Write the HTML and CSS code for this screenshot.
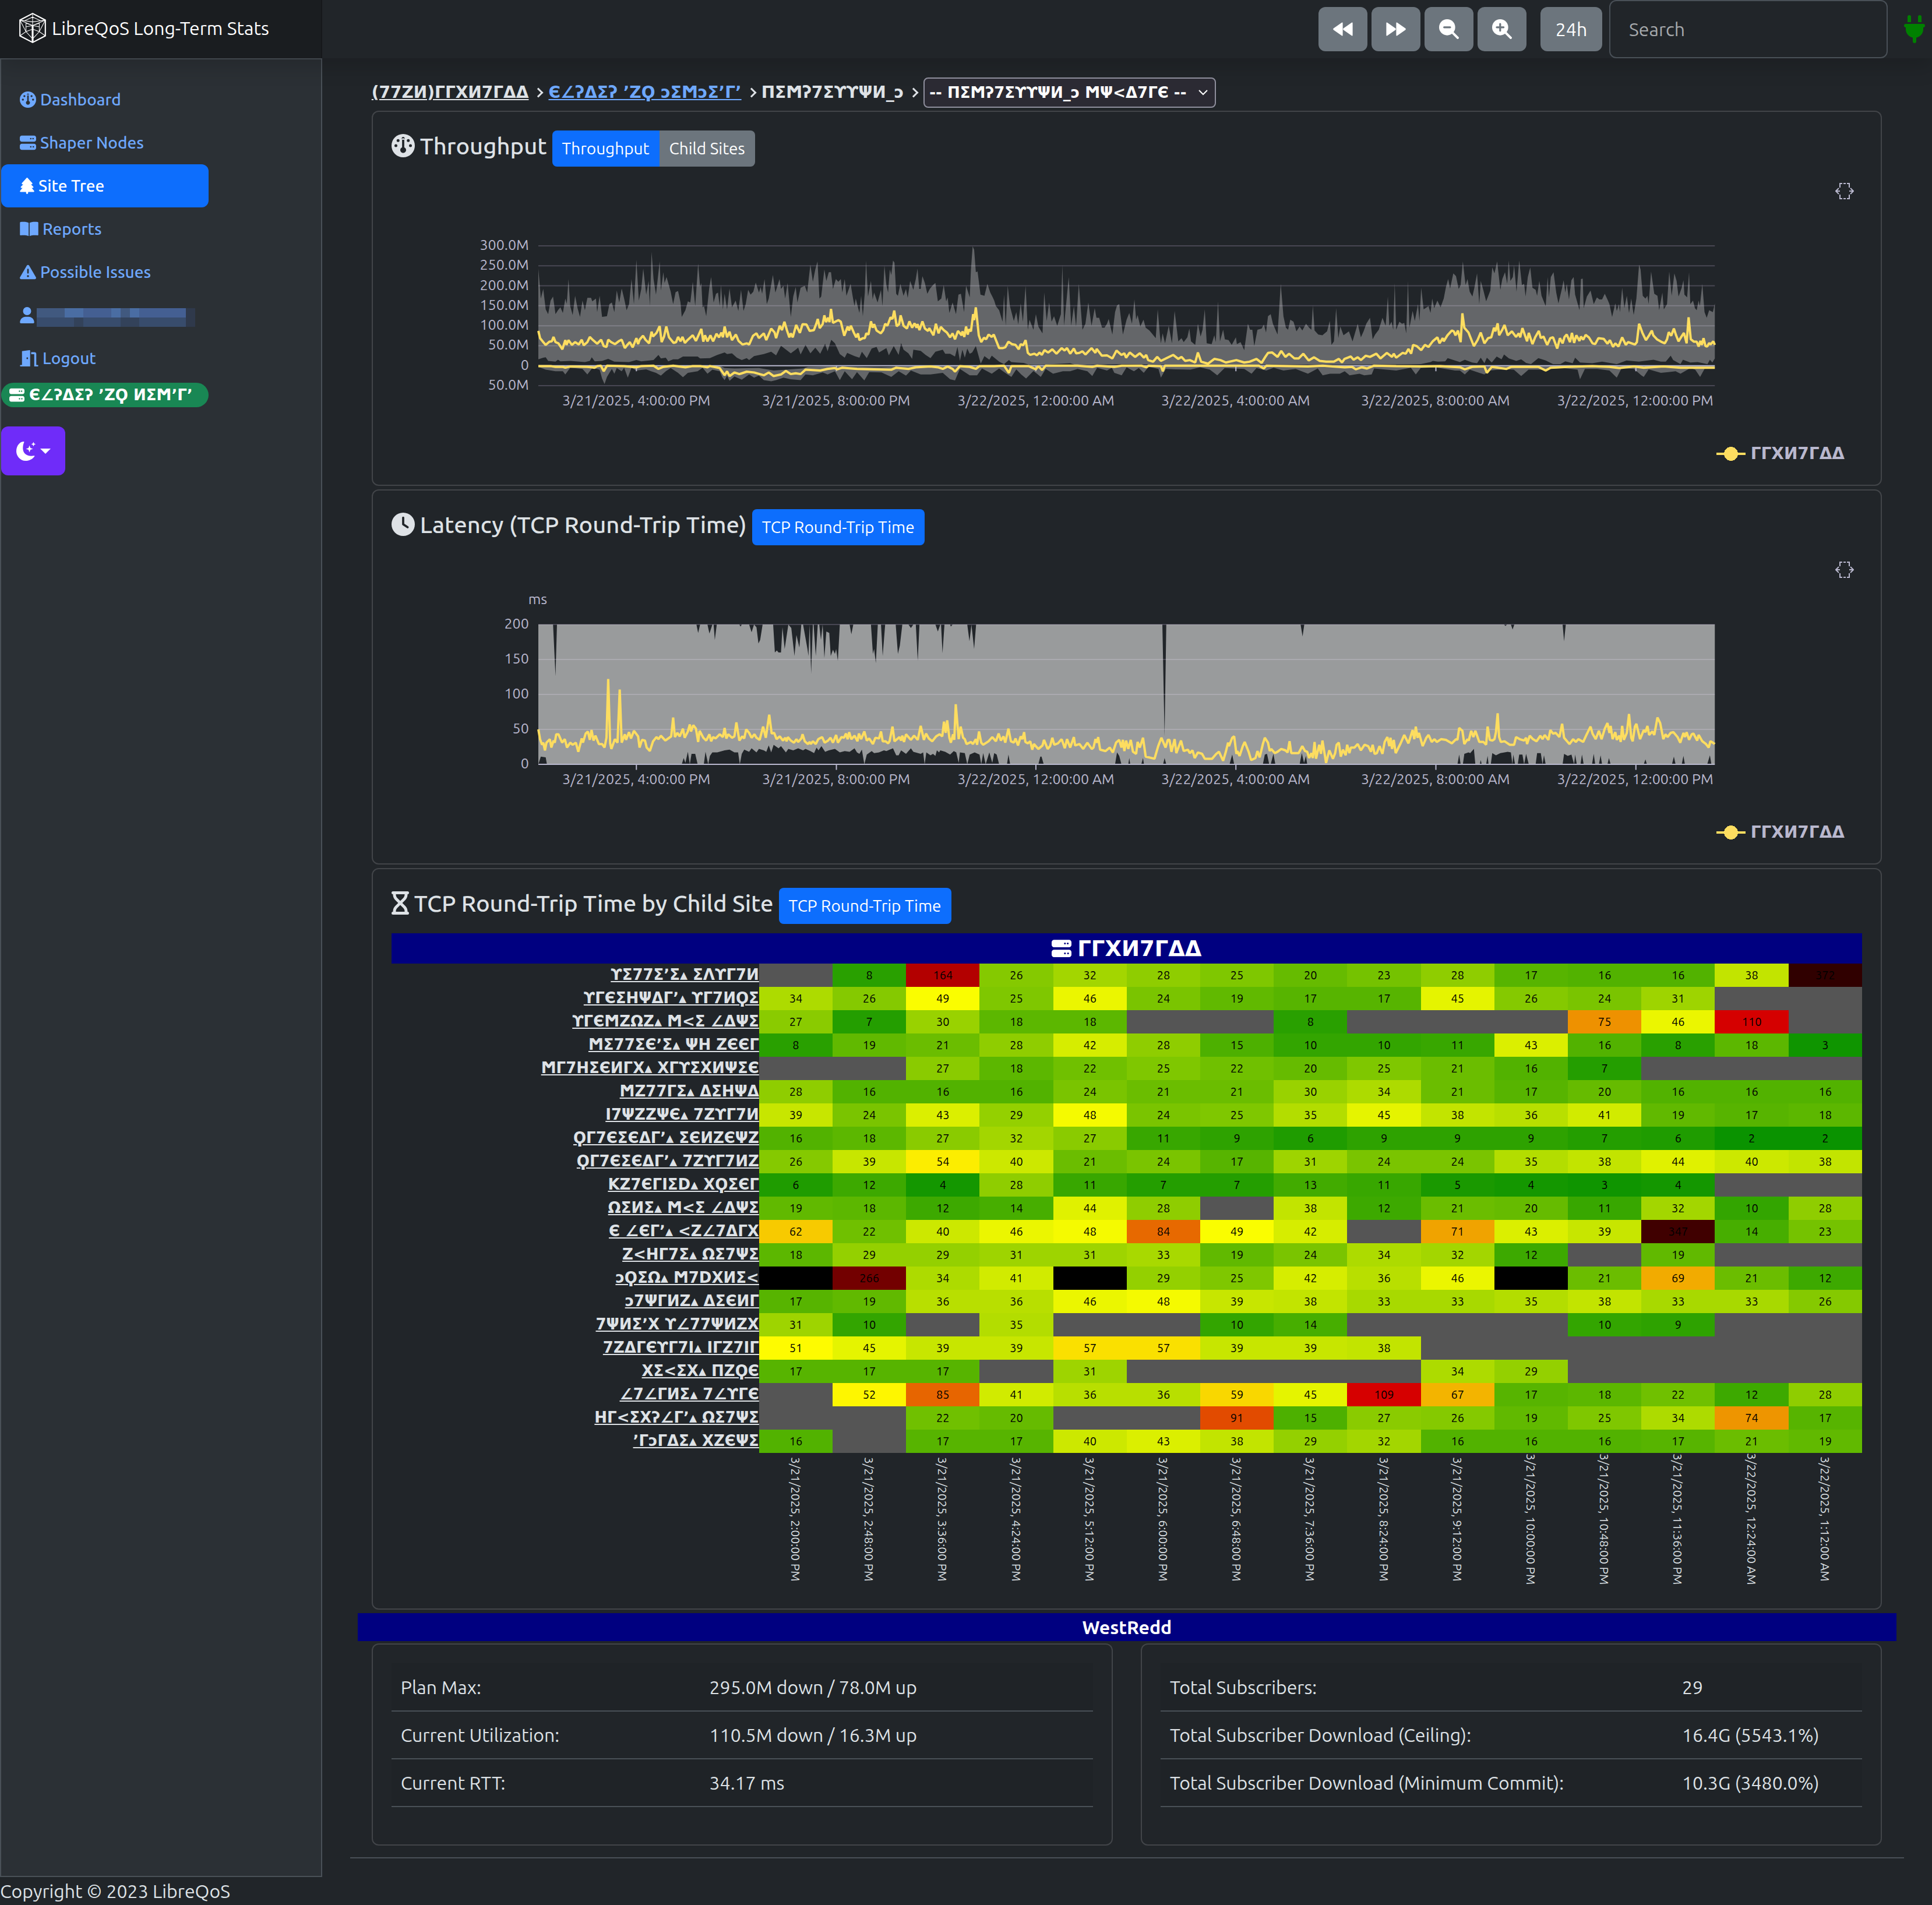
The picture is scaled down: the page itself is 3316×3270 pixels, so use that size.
FILE: index.html
```html
<!DOCTYPE html>
<html lang="en">
<head>
<meta charset="utf-8">
<title>LibreQoS Long-Term Stats</title>
<link rel="stylesheet" href="styles.css">
</head>
<body>

<svg class="sprite" aria-hidden="true">
  <symbol id="i-gauge" viewBox="0 0 512 512"><path fill-rule="evenodd" d="M256 0a256 256 0 1 1 0 512a256 256 0 1 1 0-512zM288 96a32 32 0 1 0-64 0a32 32 0 1 0 64 0zM256 416c35 0 64-29 64-64c0-24-14-46-40-57V96h-48v199c-26 11-40 33-40 57c0 35 29 64 64 64zM176 144a32 32 0 1 0-64 0a32 32 0 1 0 64 0zM96 288a32 32 0 1 0 0-64a32 32 0 1 0 0 64zM400 144a32 32 0 1 0-64 0a32 32 0 1 0 64 0zM416 288a32 32 0 1 0 0-64a32 32 0 1 0 0 64z"/></symbol>
  <symbol id="i-server" viewBox="0 0 512 512"><path d="M64 32C28.700 32 0 60.700 0 96v64c0 35.300 28.700 64 64 64H448c35.300 0 64-28.700 64-64V96c0-35.300-28.700-64-64-64H64zm280 72a24 24 0 1 1 0 48 24 24 0 1 1 0-48zm48 24a24 24 0 1 1 48 0 24 24 0 1 1 -48 0zM64 288c-35.300 0-64 28.700-64 64v64c0 35.300 28.700 64 64 64H448c35.300 0 64-28.700 64-64V352c0-35.300-28.700-64-64-64H64zm280 72a24 24 0 1 1 0 48 24 24 0 1 1 0-48zm56 24a24 24 0 1 1 48 0 24 24 0 1 1 -48 0z"/></symbol>
  <symbol id="i-tree" viewBox="0 0 448 512"><path d="M210.600 5.900L62 169.400c-3.900 4.200-6 9.800-6 15.500C56 197.700 66.300 208 79.100 208H104L30.600 281.400c-4.200 4.200-6.600 10-6.600 16C24 309.900 34.100 320 46.600 320H80L5.400 409.500C1.900 413.700 0 419 0 424.500c0 13 10.500 23.500 23.500 23.500H192v32c0 17.700 14.300 32 32 32s32-14.300 32-32V448H424.500c13 0 23.500-10.500 23.500-23.500c0-5.500-1.900-10.800-5.400-15L368 320h33.400c12.500 0 22.600-10.100 22.600-22.600c0-6-2.400-11.800-6.600-16L344 208h24.900c12.700 0 23.100-10.300 23.100-23.100c0-5.700-2.100-11.300-6-15.500L237.400 5.900C234 2.100 229.100 0 224 0s-10 2.100-13.400 5.900z"/></symbol>
  <symbol id="i-book" viewBox="0 0 576 512"><path d="M272 64C220 30 110 24 20 38Q0 42 0 64V440Q0 462 22 458C110 444 200 450 272 478ZM304 64C356 30 466 24 556 38Q576 42 576 64V440Q576 462 554 458C466 444 376 450 304 478Z"/></symbol>
  <symbol id="i-warn" viewBox="0 0 512 512"><path fill-rule="evenodd" d="M256 32c14 0 27 8 35 20L507 420c14 26-4 60-35 60H40C9 480-9 446 5 420L221 52c8-12 21-20 35-20zM232 152V280q0 24 24 24t24-24V176q0-24-24-24t-24 24zM288 384a32 32 0 1 0-64 0a32 32 0 1 0 64 0z"/></symbol>
  <symbol id="i-user" viewBox="0 0 448 512"><path d="M224 256a128 128 0 1 0 0-256a128 128 0 1 0 0 256zM178 304C80 304 0 384 0 482c0 17 13 30 30 30H418c17 0 30-13 30-30c0-98-80-178-178-178z"/></symbol>
  <symbol id="i-door" viewBox="0 0 576 512"><path fill-rule="evenodd" d="M64 32L300 0q20-2 20 20V512H24q-24 0-24-24t24-24H64zM230 224a26 30 0 1 0 0 60a26 30 0 1 0 0-60zM352 64H450q62 0 62 56V464h40q24 0 24 24t-24 24H448V128H352z"/></symbol>
  <symbol id="i-moon" viewBox="0 0 512 512"><path d="M190 0C80 10 0 120 0 256S110 512 245 512C350 512 440 460 488 386Q490 372 470 376C350 400 180 370 175 180C174 120 186 60 208 14Q212 -2 190 0zM350 100l25 69 69 25-69 25-25 69-25-69-69-25 69-25zM456 8l18 42 42 18-42 18-18 42-18-42-42-18 42-18z"/></symbol>
  <symbol id="i-back" viewBox="0 0 512 512"><path d="M250 100V412Q250 440 226 426L10 274Q-4 256 10 238L226 86Q250 72 250 100zM506 100V412Q506 440 482 426L266 274Q252 256 266 238L482 86Q506 72 506 100z"/></symbol>
  <symbol id="i-fwd" viewBox="0 0 512 512"><path d="M262 100V412Q262 440 286 426L502 274Q516 256 502 238L286 86Q262 72 262 100zM6 100V412Q6 440 30 426L246 274Q260 256 246 238L30 86Q6 72 6 100z"/></symbol>
  <symbol id="i-minus" viewBox="0 0 512 512"><circle cx="208" cy="208" r="208"/><path d="M330 330L480 480" stroke="currentColor" stroke-width="62" stroke-linecap="round"/><path d="M130 208H286" stroke="#6c757d" stroke-width="48" stroke-linecap="round"/></symbol>
  <symbol id="i-plus" viewBox="0 0 512 512"><circle cx="208" cy="208" r="208"/><path d="M330 330L480 480" stroke="currentColor" stroke-width="62" stroke-linecap="round"/><path d="M120 208H296M208 120V296" stroke="#6c757d" stroke-width="48" stroke-linecap="round"/></symbol>
  <symbol id="i-plug" viewBox="0 0 384 512"><path d="M96 0q32 0 32 32v96H64V32Q64 0 96 0zM288 0q32 0 32 32v96H256V32Q256 0 288 0zM32 160H352q32 0 32 32t-32 32v32c0 78-54 140-128 156v68q0 32-32 32t-32-32V412C86 396 32 334 32 256V224Q0 224 0 192t32-32z"/></symbol>
  <symbol id="i-clock" viewBox="0 0 512 512"><path fill-rule="evenodd" d="M256 0a256 256 0 1 1 0 512a256 256 0 1 1 0-512zM232 110V256q0 12 10 20L340 340q22 12 34-6t-6-33L280 243V110q0-24-24-24t-24 24z"/></symbol>
  <symbol id="i-glass" viewBox="0 0 384 512"><path fill-rule="evenodd" d="M32 0H352q32 0 32 32t-32 32v11c0 42-17 83-47 113L237 256l68 68c30 30 47 71 47 113v11q32 0 32 32t-32 32H32Q0 512 0 480t32-32V437c0-42 17-83 47-113L147 256L79 188C49 158 32 117 32 75V64Q0 64 0 32T32 0zM96 64v11c0 25 10 50 28 68L192 211l68-68c18-18 28-43 28-68V64zM96 448H288V437c0-25-10-50-28-68L192 301l-68 68c-18 18-28 43-28 68z"/></symbol>
  <symbol id="i-brackets" viewBox="0 0 32 28"><path fill="none" stroke="#b9b8ce" stroke-width="2" d="M8 8V1H12M14 1H18M20 1H24V8M8 20V27H12M14 27H18M20 27H24V20M6 9L1 14L6 19M1 14H8M26 9L31 14L26 19M31 14H24"/></symbol>
</svg>

<header class="navbar">
  <a class="brand" href="#">
    <svg class="logo" viewBox="0 0 46 52" stroke="#fff" stroke-width="2">
      <path stroke-width="2" d="M23 2L44 13V39L23 50L2 39V13Z"/>
      <path stroke-width="1" d="M2 13L23 22L44 13M23 2V22M2 13L23 16L44 13M23 8L10 14M23 8L36 14M23 22L12 18V32L23 44M23 22L34 18V32L23 44M2 39L12 32L23 28L34 32L44 39M12 32L2 13M34 32L44 13M12 24L23 22L34 24"/>
      <path stroke-width="3" d="M23 22V50"/>
    </svg>LibreQoS Long-Term Stats</a>
  <div class="tools">
    <button class="tool" aria-label="Back"><svg><use href="#i-back"/></svg></button>
    <button class="tool" aria-label="Forward"><svg><use href="#i-fwd"/></svg></button>
    <button class="tool" aria-label="Zoom out"><svg><use href="#i-minus"/></svg></button>
    <button class="tool" aria-label="Zoom in"><svg><use href="#i-plus"/></svg></button>
    <button class="tool period">24h</button>
  </div>
  <input class="search" type="text" placeholder="Search" aria-label="Search">
  <svg class="plug"><use href="#i-plug"/></svg>
</header>

<div class="layout">
<nav class="sidebar">
  <div class="menu">
    <a href="#"><svg><use href="#i-gauge"/></svg>Dashboard</a>
    <a href="#"><svg><use href="#i-server"/></svg>Shaper Nodes</a>
    <a href="#" class="active"><svg class="slim"><use href="#i-tree"/></svg>Site Tree</a>
    <a href="#"><svg class="wide"><use href="#i-book"/></svg>Reports</a>
    <a href="#"><svg><use href="#i-warn"/></svg>Possible Issues</a>
    <a href="#" class="who" aria-label="Account"><svg class="slim"><use href="#i-user"/></svg><svg class="masked" viewBox="0 0 17 2" preserveAspectRatio="none" shape-rendering="crispEdges">
      <path fill="#41597f" d="M0 0H17V1H0z"/><path fill="#4a6da3" d="M3 0h2v1H3zM8 0h1v1H8zM10 0h1v1h-1z"/><path fill="#445f92" d="M5 0h3v1H5zM11 0h5v1h-5z"/><path fill="#384c6c" d="M0 1H17V2H0z"/><path fill="#33425a" d="M4 1h1v1H4zM9 1h2v1H9z"/><path fill="#2f394b" d="M16 0h1v2h-1z"/></svg></a>
    <a href="#"><svg class="wide"><use href="#i-door"/></svg>Logout</a>
    <span class="badge"><svg><use href="#i-server"/></svg><span class="alien">Є∠ʔΔΣʔ ʼZϘ ИΣϺʼΓʼ</span></span>
  </div>
  <button class="theme" aria-label="Theme"><svg><use href="#i-moon"/></svg><i class="caret"></i></button>
</nav>

<main>
  <div class="crumbs">
    <a class="alien plain" href="#">(77ZИ)ΓΓXИ7ΓΔΔ</a><span class="sep"></span>
    <a class="alien" href="#">Є∠ʔΔΣʔ ʼZϘ ͻΣϺͻΣʼΓʼ</a><span class="sep"></span>
    <span class="alien">ПΣϺʔ7ΣϒϒΨИ_ͻ</span><span class="sep"></span>
    <span class="pick"><select class="alien" aria-label="Child site"><option>-- ПΣϺʔ7ΣϒϒΨИ_ͻ ϺΨ&lt;Δ7ΓЄ --</option></select><svg viewBox="0 0 16 10"><path fill="none" stroke="#fff" stroke-width="2" d="M1 1L8 8L15 1"/></svg></span>
  </div>

  <section class="card">
    <h5><svg><use href="#i-gauge"/></svg>Throughput <span class="group"><button class="on">Throughput</button><button>Child Sites</button></span></h5>
    <div class="chart">
      <svg class="toolbox"><use href="#i-brackets"/></svg>
      <div class="plotrow">
        <div class="yaxis"><span>300.0M</span><span>250.0M</span><span>200.0M</span><span>150.0M</span><span>100.0M</span><span>50.0M</span><span>0</span><span>50.0M</span></div>
        <svg class="plot" viewBox="0 0 480 350" preserveAspectRatio="none">
          <g transform="translate(0 300) scale(1 -1)">
            <path class="grid" d="M0 300H480M0 250H480M0 200H480M0 150H480M0 100H480M0 50H480M0 -50H480"/>
            <path class="band" fill-rule="evenodd" d="M0 0L0,243 1,168 2,192 3,141 4,129 5,163 6,173 7,129 8,139 9,146 10,132 11,168 11.600,155 12.300,217 13,149 14,127 15,175 16,144 17,122 18,163 19,139 20,170 21.500,170 22,161 23.500,168 24,134 25,175 26,122 28,124 29,154 30,158 31,134 32,188 33,158 34,193 35,168 36,139 37,154 38,217 39,154 40,265 41,163 42,192 42.800,243 44,178 45,212 45.500,149 46.200,285 47,217 48,178 49.500,261 50,188 51,234 51.500,207 52.300,222 53,207 54,185 55,154 56,184 57,187 58,158 58.500,122 60,139 61,161 62,158 63,210 64,149 65.200,256 66,197 66.500,207 67,146 67.600,149 68.500,124 69.700,193 70.500,222 71.500,158 72.500,180 73.300,183 74,149 74.500,202 75.300,141 76,180 77,141 78,193 79,146 80.500,163 81.600,137 82.700,190 83.700,137 84.600,154 85.600,190 86.600,178 87.700,185 88.700,208 90,183 90.700,197 91.300,180 92.300,217 93.200,154 94,168 95.700,227 96.700,183 97.400,197 98.400,217 99,192 100,200 100.700,168 101.700,207 103,122 104,173 105,197 105.700,158 107,195 108.700,200 109.700,183 110.400,222 111,253 112,210 113,241 113.900,261 114.700,168 115.400,173 116.700,241 117.500,212 118.500,234 119.400,234 120.200,192 121.400,217 122.400,210 123.400,217 124,183 125,217 125.700,175 127.400,205 128.400,168 129,149 129.500,168 131,132 131.700,175 132.400,124 133.200,183 133.700,263 134.500,173 135.700,212 136.400,166 137,183 138.400,158 139.800,190 140.400,149 141.200,251 142,202 142.700,183 143.400,241 144,227 144.700,263 145.300,258 146,180 146.700,175 147.700,205 149,175 150,192 150.700,170 151.700,212 153,190 154,217 154.700,243 155.400,192 156,192 156.700,224 157.700,207 158.700,180 159.700,192 161,202 162,207 163,161 164.400,168 165.400,202 166.400,161 167,171 167.700,132 169,158 170.400,129 171.400,178 172.400,180 173.700,134 174.500,200 175.400,183 176,171 176.500,241 177.200,299 177.800,290 178.500,234 179.200,236 180.400,178 182,175 183.200,205 184.400,183 185.400,171 186,163 186.700,149 188,139 189.400,110 190,178 190.700,100 191.500,200 192.400,149 194,112 195,134 195.800,103 196.800,156 197.700,110 198.800,200 199.700,90 200.400,115 202,90 203,129 204,98 205.700,81 206.400,183 207.400,112 208.400,158 209.400,110 210.400,124 211.700,100 213.200,129 213.800,253 214.500,100 216.400,222 217.400,100 218.500,149 219.400,98 220.500,205 222,90 223.200,105 224.400,158 225.700,100 227,144 227.700,120 228.800,120 230,95 231,95 232,105 232.700,117 234.200,78 235.300,134 236.100,151 237,154 238.500,78 240,115 241.100,132 242.200,105 243.200,166 243.900,115 244.500,127 245.600,98 246.900,115 247.800,95 249.300,88 250.300,81 251.900,69 252.700,141 253.600,76 254,56 254.700,81 255.700,56 257.200,100 258.500,56 259.600,137 261.100,61 262.400,69 263.300,59 264.800,71 265.600,93 266.300,61 268,52 269.100,105 270.200,73 271,90 271.900,141 272.700,56 274.700,54 275.800,76 276.400,59 277.300,161 278.100,61 279.400,90 280.100,66 281.600,64 282.900,52 284.600,71 285,54 286.500,59 288,39 289.500,105 290.400,90 291.300,90 292.100,49 293.400,90 295.100,93 296,103 296.900,83 297.700,124 298.800,129 299.700,105 301.600,78 302.900,205 304,124 305,95 305.900,90 306.800,115 308.100,110 309.300,86 310.600,98 311.700,88 313.200,105 314.500,95 315.400,90 316,151 316.700,88 318.200,78 319.900,76 321.800,86 322.900,112 323.600,52 324.600,61 325.500,144 326.400,69 327.200,98 328.500,76 330.700,86 332.200,61 334.300,105 335.600,71 336.700,86 337.800,105 339.300,120 340.400,66 341.400,78 342.900,90 344.400,120 345.700,100 346.600,173 347.200,100 348.100,110 348.800,90 349.400,207 350,90 351.300,110 352.400,105 353.300,107 354.100,81 354.800,212 355.400,95 356.700,137 357.600,112 358.900,154 359.500,112 360.200,195 361.200,141 363.200,149 364,132 364.700,168 365.500,144 366.800,163 368.100,146 369.400,168 370.300,197 371.200,217 372,193 373.300,231 374.400,224 375.500,192 376.300,202 377.200,261 378.300,202 379.100,217 380,185 381.100,173 381.900,195 383,231 383.900,154 384.500,212 385.600,188 386.700,161 388.400,188 389.200,246 390.100,231 391.200,261 392.500,190 393.300,217 394.400,234 395.300,205 395.900,263 396.600,212 397.600,222 398.100,251 399.100,185 400.200,263 401.300,202 402.200,205 402.800,173 403.700,222 404.700,246 405.600,195 406.900,190 407.500,175 408.400,212 409.300,175 411,149 411.800,222 412.300,171 413.100,222 414.200,234 415.300,183 416.200,156 417.700,195 418.300,214 419,183 419.600,205 420.500,166 421.500,214 422.400,222 423,178 424.800,139 425.400,217 426.100,218 426.500,144 427.800,173 429.300,188 430.600,154 431.900,171 432.900,166 434,166 435.100,180 436.200,166 437,154 438.100,122 439.400,156 440,137 440.900,154 441.300,134 442.200,195 443.100,144 444.100,175 445,132 445.900,168 446.900,127 448,168 449.100,253 449.700,241 450.600,175 451.700,168 452.500,175 453,154 454,236 455.300,180 456.600,175 457.300,139 458.600,183 459.200,141 460.500,154 461.400,236 462.400,175 463.500,231 464.400,212 465.200,173 466.500,195 467.200,214 467.600,178 468.700,171 469.500,234 470,154 471.100,163 471.900,144 472.600,139 473.400,163 473.900,149 474.900,205 475.800,134 476.700,120 477.700,139 479.200,134 480,156 480,0Z
              M0 0L0,16 2,20 3,21 4,12 7,10 8,15 9,11 13,12 19,9 21,12 21.800,21 23,11 26,12 28.500,17 31,10 37,9 40,14 42,11 47,14 49,27 50,18 52,20 53,11 55,16 57,16 59,23 65,23 66,18 70,19 73,27 76,33 77,29 79,31 81,20 83,14 85,19 86,14 88,24 92,29 95,35 97,26 99,50 103,31 105,40 106,45 107,28 109,52 111,31 113,45 115,30 117,55 118,36 119.500,65 121,56 123,29 125,20 126,32 129,24 131,20 132,35 134,19 136,43 138,47 139,33 142,44 143,26 145,49 147,27 148,57 149,40 151,31 152.500,17 153,40 156,37 158,27 160,19 162,35 165,40 166,30 168,30 170,23 171,47 172,12 173,40 174,20 175,43 176,30 177,33 178.500,49 180,16 180.500,5 182,24 184,15 185,25 188,10 190,4 192,14 193,9 195,8 198,7 200,3 205,2 217,6 219,2 240,4 260,2 300,3 340,3 360,4 364,9 365,12 367,10 370,11 371,19 373,15 376,9 378,15 381,8 383,6 384.500,20 386,6 387,20 389,8 391,23 393,16 394,28 396,18 399,12 401,16 403,7 405,4 408,19 411,13 414,4 417,4 419,11 422,6 423,20 425,8 430,6 434,10 440,4 444,13 449,10 455,15 458,10 460,10 462,25 463,14 466,4 467,15 470,8 473,9 477,4 478,15 479,8 480,18 480,0Z"/>
            <path class="band" fill-rule="evenodd" d="M0 0L0,-3 3,-10 7,-14 10,-14 11,-22 13,-5 18,-8 20,-22 22,-6 24,-8 25,-10 26,-32 27,-46 28,-28 29,-18 30,-8 31,-20 32,-6 34,-14 35,-5 36.500,-30 38,-5 40,-12 44,-9 46,-14 48,-18 50,-25 52,-14 54,-6 57,-18 59,-29 61,-18 65,-14 67,-5 69,-20 71,-10 74,-14 75,-28 76,-36 77,-25 78,-38 80,-27 83,-35 86,-22 88,-30 90,-25 92,-36 95,-39 97,-36 100,-30 103,-34 107,-36 109,-22 112,-24 116,-17 118,-22 121,-14 123,-36 125,-14 128,-34 130,-16 133,-37 135,-16 140,-17 144,-28 147,-14 150,-25 152,-12 156,-22 160,-22 165,-18 168,-34 170,-37 172,-8 176,-24 179,-24 181,-7 185,-20 188,-7 191,-20 193,-28 195,-9 197,-22 199,-32 202,-13 205,-28 207,-8 210,-20 214,-14 217,-14 220,-8 224,-14 226,-26 228,-5 232,-12 234,-5 235,-18 238,-24 240,-4 243,-14 245,-6 247,-18 249,-3 253,-8 254,-30 256,-8 260,-9 266,-10 270,-4 274,-10 277,-24 280,-6 284,-7 288,-8 291,-20 293,-6 297,-12 300,-5 304,-12 309,-8 314,-20 318,-7 320,-24 323,-20 327,-20 329,-14 331,-24 335,-20 337,-24 340,-22 341,-7 346,-10 350,-12 356,-5 358,-22 360,-6 366,-4 374,-12 376,-12 378,-22 380,-10 386,-22 388,-12 392,-10 395,-9 398,-10 401,-26 404,-10 410,-10 413,-8 418,-6 424,-10 425,-34 427,-8 432,-8 437,-12 440,-30 442,-6 447,-8 450,-24 451,-28 453,-9 458,-18 461,-16 464,-14 466,-20 470,-6 472,-10 474,-28 476,-6 480,-6 480,0Z
              M0 0L74,0 76,-6 80,-7 90,-6 96,-12 108,-7 110,-3 120,-2 140,-4 150,-2 165,-1 170,0Z"/>
            <path class="axis" d="M0 0H480M40 0V-14M121.600 0V-14M203 0V-14M284.600 0V-14M366.200 0V-14M447.800 0V-14"/>
            <polyline class="line" points="0,87 .7,69 2,59 3,52 4.500,60 5.500,61 6.200,72 7,59 8.200,56 9.800,41 11,64 11.500,52 12.300,64 13.700,52 15,59 16.500,53 17.700,65 18.500,51 20,59 21,72 22.300,64 24,55 25.600,65 26.700,49 27.800,47 28.500,65 29.700,59 31.300,54 33,62 34,65 35.300,44 36.300,52 37.300,59 38.500,46 40,69 40.700,54 41.300,65 42.700,75 43.700,65 45.200,56 46.200,85 46.800,73 48.200,82 49.500,99 50.300,59 51.300,73 52.200,98 53.300,71 55.200,57 56.200,59 57,72 58,61 58.800,72 59.800,57 61,65 63,76 64.300,62 66.500,92 67.300,60 68,76 69,61 70.200,76 71.300,61 72.700,80 73.700,71 74.700,83 75.300,71 76,98 77,71 78,85 79,64 80.600,78 81.700,62 83.300,53 85,56 86,53 87.600,75 89,81 90,69 91,75 92,81 93,64 95,93 96.400,83 97,69 98.500,100 99.400,89 100.400,110 101.400,89 102.400,71 103,81 103.800,71 105.200,102 106.700,82 107.800,104 109.400,103 110.700,87 112.400,89 113.400,105 114,117 114.800,94 116,104 116.700,126 117.400,109 118.200,120 118.800,109 119.400,142 120.200,107 122.400,114 123.400,110 124.800,75 126.200,98 126.800,88 127.500,100 128.700,83 129.700,71 130.400,81 131,64 132.400,69 133.200,69 133.800,81 134.700,78 135.700,111 136.400,95 137,104 138,88 139.700,81 140.700,89 141.500,105 142.400,100 143.700,121 144.500,117 145.200,138 146.200,99 147.200,104 147.800,126 149,100 150.400,93 151.400,111 152.500,95 153.500,106 154.300,95 154.700,104 155.500,89 156.700,111 157.700,93 159,87 159.500,94 161.200,76 162.200,105 163.300,81 164.200,97 165.400,89 166.700,83 168,71 169,81 170,66 171.200,87 172.700,76 173,86 173.800,72 174.500,98 175.200,78 175.700,91 176.500,86 177.400,129 177.800,114 178.500,146 179.700,76 180.700,59 181.800,70 182.700,66 183.700,78 185,72 185.800,78 186.700,64 188,44 189.400,44 190.500,46 191.800,60 193.200,54 194.700,52 196,41 196.800,54 197.800,51 198.800,64 199.700,32 200.700,27 202.400,30 203.400,26 204.500,33 205.400,27 206.500,39 208,33 209.700,41 211.400,30 213.500,44 214.700,38 215.700,44 217,30 218.500,43 219.400,31 220.700,32 222,36 223.200,28 225.700,44 227.300,32 227.800,42 229.900,25 232,26 234.200,18 235.900,38 237.900,27 239.100,31 239.800,20 241.300,33 243.500,22 245.400,31 247.100,20 248,27 248.800,14 250.800,10 252.500,22 254,12 255.700,17 259,27 261.100,17 262.400,22 263.900,12 265.800,14 268,8 269.100,33 270.400,10 273.200,5 275.800,17 278.300,14 280.500,8 284.800,14 288,8 290.200,10 293,17 295.100,7 296.600,22 297.700,32 299.400,33 301.600,22 303.100,37 304.800,22 306.300,30 308.500,18 310.200,18 312.100,30 314.300,13 316.500,21 318.800,12 321.400,10 324.600,10 326.600,17 327.900,8 328.900,17 331.500,23 332.600,15 334.300,21 335.600,14 337.600,25 339.300,22 341.900,30 343.600,18 346.200,32 348.300,22 349,30 350,20 352.600,32 353.900,30 355,42 356.100,30 356.900,52 358.400,49 360.200,39 361.700,52 363.200,47 364.900,61 366.800,71 367.700,56 369,69 369.400,61 370.900,76 372.700,88 373.500,86 374.200,76 375.200,88 376.300,59 377,131 377.800,95 379.500,83 381.700,49 383.200,64 384.500,83 386,56 387.500,69 388.800,71 389.900,95 390.500,86 391.400,106 392,76 393.300,90 394.200,102 395.500,76 397.200,86 398.900,72 400,81 400.600,71 401.500,94 403.400,61 404.100,82 405.600,54 406.700,71 408.200,87 409,69 410.100,73 411.600,52 412.900,69 414,71 415.700,43 416.800,69 417.900,56 418.700,72 419.600,78 420.900,59 421.700,82 422.600,57 423.500,76 424.800,62 425.400,73 426.300,65 427.300,77 428.600,71 430.100,56 431.200,54 432.500,69 434.700,67 436.200,55 437.200,64 438.500,47 439.400,56 440.700,48 442.200,71 443.700,52 444.600,59 447.400,53 448.200,59 449.100,105 450.400,83 451.900,64 453.200,76 454.300,88 454.900,76 456.400,66 458.100,60 459.600,56 460.500,66 461.200,84 462.200,75 463.300,93 464.200,76 465.200,61 466.300,72 467.400,82 468.500,56 469.300,121 470.200,66 471.500,60 472.600,60 473.400,48 474.100,62 474.700,52 475.400,69 476.200,49 476.900,48 477.700,57 478.200,53 479.400,61 480,52"/>
            <polyline class="line" points="0,-1 5,-1 7,-3 10,-3 11,-5 13,-2 20,-3 23,-5 24,-1 25.500,0 26.700,-14 28,0 35,-1 40,-4 42,-1 47,0 49,-8 51,-3 55,0 60,-4 63,-1 66,-1 69,-4 70,-1 74,-6 76,-24 77,-14 78,-26 80,-17 82,-21 85,-15 88,-17 92,-24 94,-17 96,-26 99,-22 101,-13 103,-21 105,-19 107,-21 109,-10 115,-12 118,-8 121,-6 122,-9 124,-5 130,-8 137,-9 144,-10 146,-5 151,-8 154,-4 160,-2 163,-4 165,-8 167,-2 169,-8 170,-15 172,-1 176,-3 178.500,-8 180,-1 186,-1 190,0 192,-18 193,-1 200,-1 203,-9 204,-1 205.500,-11 207,0 220,0 226,-3 228,0 235,-3 238,0 246,0 248,-4 249,0 254,-1 254.800,-14 255.600,0 294,0 296,-7 297,0 314,-2 320,0 324,-2 329,-4 332,-3 333.500,-9 336,-4 338,-7 341,0 350,-1 360,-2 368,-1 376,-4 378,-9 381,-3 386,-2 387,-18 389,-3 395,-8 397,-3 408,-3 411,-12 413,-5 420,-3 430,-1 437,-3 441,-6 447,-2 451,-5 459,-2 466,-5 480,-5"/>
          </g>
        </svg>
      </div>
      <div class="xaxis"><span>3/21/2025, 4:00:00 PM</span><span>3/21/2025, 8:00:00 PM</span><span>3/22/2025, 12:00:00 AM</span><span>3/22/2025, 4:00:00 AM</span><span>3/22/2025, 8:00:00 AM</span><span>3/22/2025, 12:00:00 PM</span></div>
      <div class="legend"><i></i><span class="alien">ΓΓXИ7ΓΔΔ</span></div>
    </div>
  </section>

  <section class="card">
    <h5><svg><use href="#i-clock"/></svg>Latency (TCP Round-Trip Time) <span class="group"><button class="on">TCP Round-Trip Time</button></span></h5>
    <div class="chart">
      <svg class="toolbox"><use href="#i-brackets"/></svg>
      <div class="unit">ms</div>
      <div class="plotrow">
        <div class="yaxis"><span>200</span><span>150</span><span>100</span><span>50</span><span>0</span></div>
        <svg class="plot" viewBox="0 0 480 200" preserveAspectRatio="none">
          <g transform="translate(0 200) scale(1 -1)">
            <path class="grid" d="M0 200H480M0 150H480M0 100H480M0 50H480"/>
            <path class="band dense" fill-rule="evenodd" d="M0 0L0,200 6,200 7,126 7.600,200 64.500,200 65.200,188 66,200 69,200 69.800,187 71,200 71.500,200 72,178 72.800,200 82,200 82.500,197 83,200 86,200 87,189 88,200 89,196 89.800,173 90.500,178 91.500,200 95.800,200 96.500,160 97.300,163 98,160 99,160 99.600,196 100.500,165 102,200 103.200,195 104.500,155 105.300,185 106.500,167 107.300,200 108,200 109.800,165 110.200,155 110.700,200 111.300,130 112,200 112.300,200 113.200,155 114,200 114.600,200 115.300,178 116,200 116.700,152 117.500,190 118.700,188 119.300,155 120.200,164 121,158 121.500,165 122.200,148 123,200 127,200 127.700,186 128.500,200 135.700,200 136.500,158 137,165 137.700,145 138.500,200 139.800,200 140.500,155 141.500,200 145.800,200 146.700,158 147.500,170 148.500,200 151,200 152,195 153,200 154,200 154.800,148 155.500,200 162,200 163,190 164,200 164.300,200 164.900,159 165.700,200 168,200 168.300,197 169,200 175,200 175.900,176 176.700,200 177.800,165 178.600,200 254.600,200 255.500,40 256.200,200 311,200 311.800,183 312.500,200 394,200 394.600,198 395.200,200 396.800,200 397.500,193 398.200,200 417.900,200 418.500,176 419.200,200 480,200 480,0Z
              M0 0L1,11 3,10 3.500,0 58.500,0 59.300,9 60,2 61,18 61.800,0 62.500,15 64,15 65,0 67.500,0 68.200,18 69.300,0 70,12 71,17 73,17 76,20 78,21 80,17 81.500,17 82.200,0 83,15 84,21 86,18 87,23 89,17 90,22 92,20 93,18 94,27 95,17 96,28 98,23 99,26 101,17 102,22 104,20 106,23 108,20 109,22 111,19 112.500,16 113.500,24 114.300,20 115.500,26 117,18 118.500,20 121,22 123,17 125,19 127,18 129,23 130,17 131,15 132,21 133,0 134,14 136,19 137,16 139,17 141,20 142,19 144.700,23 146,13 147,13 148,20 150,15 152,23 153,18 156,15 157,17 157.600,0 158.300,17 160,13 161,15 162,12 162.600,20 163.500,17 164,20 166,18 168,14 169.500,19 170.500,17 171.500,2 172,17 174,16 175,0 176,14 178,17 180,14 180.700,0 181.500,16 182.500,0 184,17 185.200,2 186,16 187,14 188,0 191.200,0 191.800,14 192.500,0 204,0 204.800,11 205.300,11 206.200,0 235.300,0 236.100,17 237,12 237.900,0 240.700,0 241.100,9 241.500,0 246,0 246.700,9 247.100,0 254.900,0 255.500,9 256.200,0 282,0 283.100,14 283.900,0 295.600,0 296.400,14 297.300,15 298.200,0 298.800,0 299.900,15 300.700,0 310.600,0 311.500,16 312.400,2 313.200,12 313.700,0 375,0 375.700,14 376.300,0 377.200,0 377.800,15 379.500,17 380.200,16 381.700,22 382.300,0 384.100,0 384.500,6 384.900,0 386.700,0 387.300,12 387.700,0 388.600,0 389.200,16 390.700,13 392.500,16 394.200,17 395.500,18 396.800,17 397.400,0 397.800,14 398.500,0 399.600,0 400.200,14 401.500,14 402.200,0 403,15 404.100,0 406.900,0 407.500,16 409,16 409.700,0 410.300,13 411,0 417.900,0 418.500,15 420,12 421.500,14 422.600,0 423,14 423.700,0 425.200,0 425.800,14 426.500,0 429.900,0 430.600,15 431.200,0 432.700,0 433.400,13 434,0 436.200,0 436.800,9 437.500,0 451,0 451.700,7 452.300,0 462.500,0 463.300,11 464,0 466.500,0 467.200,12 467.800,0 476.900,0 478,13 478.600,0 480,0Z"/>
            <path class="axis" d="M0 0H480M40 0V-8M121.600 0V-8M203 0V-8M284.600 0V-8M366.200 0V-8M447.800 0V-8"/>
            <polyline class="line" points="0,50 .7,36 1.500,28 2,31 2.700,20 3.300,31 4.700,36 5.300,24 6.200,34 6.700,31 7.300,43 8.200,43 9.700,31 10.800,36 11.700,24 13,31 14,28 15.300,31 16.300,18 17.700,37 18.200,31 19.300,44 20.200,47 21,35 21.700,49 22.500,34 23.300,41 24.700,29 26,29 27,24 27.800,38 28.500,122 29.300,30 29.800,22 31.200,36 32.300,31 33.200,107 34,31 35.300,43 35.800,35 37,46 37.800,37 39,48 40.700,40 41.300,24 42.300,35 43.500,34 44.200,24 45.500,19 46.800,33 48.200,39 49,36 50,41 51.800,34 54.200,40 55,67 55.700,39 56.700,45 57.700,40 59,51 59.700,38 61,47 61.800,57 62.300,47 63.200,56 64.300,51 65.200,32 65.800,48 67.300,38 68.500,34 69.800,43 70.500,33 71.300,39 72.300,37 74,43 75.300,39 76,52 76.700,37 77.500,43 79,38 80,40 80.800,60 82,34 83.200,40 84,37 84.800,50 86,45 87,38 88.200,43 89,38 90.300,35 91.700,54 92.800,38 94.200,71 95.200,44 96.200,45 97.200,36 98.500,40 99.800,34 100.700,38 101.300,33 101.800,39 103,34 104.300,31 105.300,36 106,32 107.300,37 107.800,43 108.700,33 110,29 110.700,32 111.200,29 112,33 113.200,29 114.200,36 115.800,39 116.800,31 118.200,34 119.200,38 120.200,31 121.500,42 122.200,31 123.700,39 124.700,38 125.500,44 126.200,36 126.800,46 127.700,36 129,41 130.200,33 130.800,44 131.700,36 133,47 134,34 135,37 136.500,29 137.500,38 139,37 139.800,47 140.500,33 141.700,33 142.700,30 143.300,33 144.500,54 145.300,33 146.700,37 147.300,39 148,34 148.500,41 149.200,32 150,43 152,35 153.300,41 154.800,35 156,55 157.300,35 158.200,44 159.300,37 160.700,33 162.300,40 163.700,43 164.800,40 165.500,61 166.200,45 166.800,63 167.700,38 168.300,31 169.200,43 169.700,35 170.300,86 171.500,36 172.300,54 173.300,38 174,36 174.700,29 176.500,32 177.300,29 178.500,36 179,28 179.800,47 180.700,31 181.500,28 183.700,33 185.200,39 186.700,33 187.800,44 188.700,34 189.800,40 190.500,31 191.800,51 192.800,33 194,31 194.700,37 195.700,27 196.800,40 197.500,36 198.200,46 198.700,32 199.700,30 200.700,33 201.500,21 202.200,29 204,22 205.700,27 206.300,35 207.800,22 208.800,26 209.700,38 210.500,28 212,30 213.500,36 214.800,23 215.700,36 217,24 218.500,39 219,27 220.800,29 222.300,22 224,31 225.800,22 226.500,24 227.300,36 228,31 228.400,39 229.200,21 231.400,19 233.100,24 234.400,17 235.700,31 237,35 237.900,24 238.500,35 239.100,19 239.800,34 240.700,22 241.700,35 242.600,18 243.900,15 244.500,32 245.400,24 246.700,38 247.800,11 251.400,8 252.900,26 254.200,38 255.900,24 256.800,35 257.500,35 258.300,18 259.600,36 260.300,16 262.200,34 263.300,19 265,21 265.800,16 266.900,20 267.800,9 269.100,17 270.800,15 271.900,8 274.900,8 276.600,15 277.700,18 279.400,5 280.500,18 281.400,31 281.800,26 283.100,38 283.900,40 284.800,15 285.200,19 286.100,12 287.400,26 288.200,32 289.800,18 290.800,6 292.600,9 293.400,19 294.300,10 295.600,29 296.400,38 297.700,31 298.400,19 299,22 300.500,16 301.600,18 303.100,22 304.800,20 305.700,17 306.500,33 307.200,16 310.200,16 311.700,26 312.800,19 313.700,18 314.500,9 315.400,16 316,9 316.700,32 317.300,8 318.600,28 319.300,15 319.900,34 320.800,15 321.400,2 322.700,20 324.200,8 325.100,16 325.700,28 326.600,31 327.400,11 328.300,21 329.400,13 330,28 330.900,16 331.500,24 333,24 334.300,29 335.600,20 337.100,28 338.600,26 339.700,18 340.400,28 341.200,15 342.100,16 343.200,26 344.400,15 345.300,32 346.400,39 347.200,26 347.700,38 348.300,22 349,35 349.800,16 351.800,30 353.300,42 355,30 356.700,49 357.400,36 358,54 358.700,38 359.300,45 360.800,26 362.300,38 363.200,42 364.500,32 365.600,36 366.600,32 368.300,36 370.300,35 372.700,30 374.400,36 375,35 375.700,52 377,48 377.800,29 379.100,36 379.600,34 380.600,48 381.500,39 382.300,48 383.900,32 385.600,32 386.700,28 387.300,54 388.200,35 389.200,34 390.100,36 390.700,46 391.400,73 392,39 392.700,32 394.200,33 396.300,28 398.100,28 398.900,39 400.400,36 402.200,34 403,38 403.400,29 404.500,41 405.800,36 407.300,33 408.800,41 409.700,36 410.600,42 412.100,35 412.900,49 414,44 415.100,45 416.600,39 417.700,58 418.500,38 420.700,29 422.200,36 423.300,32 424.300,36 426.300,32 427.600,42 429.300,54 430.100,44 431.400,36 432.700,48 433.800,36 435.100,51 436.200,59 437,45 437.500,55 438.300,36 439.400,46 440,35 441,41 441.600,32 442.200,55 442.900,35 444.100,45 445,72 445.900,38 446.500,33 447.400,54 448,58 449.500,36 451,49 451.700,46 452.500,55 453.200,42 454.500,47 455.300,42 456.600,67 457.700,59 459,36 459.900,43 460.700,39 462,45 463.100,46 464.800,39 465.900,31 467.200,45 467.800,39 468.500,46 469.500,35 470.600,43 471.300,44 472.800,34 473.400,42 474.900,33 476.400,29 477.500,24 478.200,33 479.200,31 480,29"/>
          </g>
        </svg>
      </div>
      <div class="xaxis"><span>3/21/2025, 4:00:00 PM</span><span>3/21/2025, 8:00:00 PM</span><span>3/22/2025, 12:00:00 AM</span><span>3/22/2025, 4:00:00 AM</span><span>3/22/2025, 8:00:00 AM</span><span>3/22/2025, 12:00:00 PM</span></div>
      <div class="legend"><i></i><span class="alien">ΓΓXИ7ΓΔΔ</span></div>
    </div>
  </section>

  <section class="card heat">
    <h5><svg class="slim"><use href="#i-glass"/></svg>TCP Round-Trip Time by Child Site <span class="group"><button class="on">TCP Round-Trip Time</button></span></h5>
    <table class="heatmap" id="heatmap">
      <colgroup><col class="names"><col span="15"></colgroup>
      <thead><tr><th colspan="16"><svg><use href="#i-server"/></svg><span class="alien">ΓΓXИ7ΓΔΔ</span></th></tr></thead>
      <tbody></tbody>
      <tfoot></tfoot>
    </table>
  </section>

  <h4 class="site">WestRedd</h4>

  <div class="pair">
    <section class="card">
      <table class="stats first">
        <tr><td>Plan Max:</td><td>295.0M down / 78.0M up</td></tr>
        <tr><td>Current Utilization:</td><td>110.5M down / 16.3M up</td></tr>
        <tr><td>Current RTT:</td><td>34.17 ms</td></tr>
      </table>
    </section>
    <section class="card">
      <table class="stats second">
        <tr><td>Total Subscribers:</td><td>29</td></tr>
        <tr><td>Total Subscriber Download (Ceiling):</td><td>16.4G (5543.1%)</td></tr>
        <tr><td>Total Subscriber Download (Minimum Commit):</td><td>10.3G (3480.0%)</td></tr>
      </table>
    </section>
  </div>
  <hr>
</main>
</div>

<footer>Copyright © 2023 LibreQoS</footer>

<script>
var rows = [
  ["ϒΣ77ΣʼΣ▴ ΣΛϒΓ7И", "- 8 164 26 32 28 25 20 23 28 17 16 16 38 372"],
  ["ϒΓЄΣΗΨΔΓʼ▴ ϒΓ7ИϘΣ", "34 26 49 25 46 24 19 17 17 45 26 24 31 - -"],
  ["ϒΓЄϺZΩZ▴ Ϻ&lt;Σ ∠ΔΨΣ", "27 7 30 18 18 - - 8 - - - 75 46 110 -"],
  ["ϺΣ77ΣЄʼΣ▴ ΨΗ ZЄЄΓ", "8 19 21 28 42 28 15 10 10 11 43 16 8 18 3"],
  ["ϺΓ7ΗΣЄИΓΧ▴ ΧΓϒΣΧИΨΣЄ", "- - 27 18 22 25 22 20 25 21 16 7 - - -"],
  ["ϺZ77ΓΣ▴ ΔΣΗΨΔ", "28 16 16 16 24 21 21 30 34 21 17 20 16 16 16"],
  ["Ι7ΨΖΖΨЄ▴ 7ZϒΓ7И", "39 24 43 29 48 24 25 35 45 38 36 41 19 17 18"],
  ["ϘΓ7ЄΣЄΔΓʼ▴ ΣЄИZЄΨZ", "16 18 27 32 27 11 9 6 9 9 9 7 6 2 2"],
  ["ϘΓ7ЄΣЄΔΓʼ▴ 7ZϒΓ7ИZ", "26 39 54 40 21 24 17 31 24 24 35 38 44 40 38"],
  ["ΚZ7ЄΓΙΣD▴ ΧϘΣЄΓ", "6 12 4 28 11 7 7 13 11 5 4 3 4 - -"],
  ["ΩΣИΣ▴ Ϻ&lt;Σ ∠ΔΨΣ", "19 18 12 14 44 28 - 38 12 21 20 11 32 10 28"],
  ["Є ∠ЄΓʼ▴ &lt;Z∠7ΔΓΧ", "62 22 40 46 48 84 49 42 - 71 43 39 347 14 23"],
  ["Z&lt;ΗΓ7Σ▴ ΩΣ7ΨΣ", "18 29 29 31 31 33 19 24 34 32 12 - 19 - -"],
  ["ͻϘΣΩ▴ Ϻ7DΧИΣ&lt;", "500 266 34 41 500 29 25 42 36 46 500 21 69 21 12"],
  ["ͻ7ΨΓИZ▴ ΔΣЄИΓ", "17 19 36 36 46 48 39 38 33 33 35 38 33 33 26"],
  ["7ΨИΣʼΧ ϒ∠77ΨИZΧ", "31 10 - 35 - - 10 14 - - - 10 9 - -"],
  ["7ZΔΓЄϒΓ7Ι▴ ΙΓZ7ΙΓ", "51 45 39 39 57 57 39 39 38 - - - - - -"],
  ["ΧΣ&lt;ΣΧ▴ ПZϘЄ", "17 17 17 - 31 - - - - 34 29 - - - -"],
  ["∠7∠ΓИΣ▴ 7∠ϒΓЄ", "- 52 85 41 36 36 59 45 109 67 17 18 22 12 28"],
  ["ΗΓ&lt;ΣΧʔ∠Γʼ▴ ΩΣ7ΨΣ", "- - 22 20 - - 91 15 27 26 19 25 34 74 17"],
  ["ʼΓͻΓΔΣ▴ ΧZЄΨΣ", "16 - 17 17 40 43 38 29 32 16 16 16 17 21 19"]
];
var times = ["3/21/2025, 2:00:00 PM", "3/21/2025, 2:48:00 PM", "3/21/2025, 3:36:00 PM", "3/21/2025, 4:24:00 PM", "3/21/2025, 5:12:00 PM", "3/21/2025, 6:00:00 PM", "3/21/2025, 6:48:00 PM", "3/21/2025, 7:36:00 PM", "3/21/2025, 8:24:00 PM", "3/21/2025, 9:12:00 PM", "3/21/2025, 10:00:00 PM", "3/21/2025, 10:48:00 PM", "3/21/2025, 11:36:00 PM", "3/22/2025, 12:24:00 AM", "3/22/2025, 1:12:00 AM"];

// green up to 50 ms, yellow to red up to 108 ms, then fading to black
function color(v) {
  var r, g;
  if (v <= 50) { r = 5.1 * v; g = 142 + 2.26 * v; }
  else if (v < 108) { r = 255 - 0.7 * (v - 50); g = 255 - 4.4 * (v - 50); }
  else { r = Math.max(0, 214 - 0.63 * (v - 109)); g = 0; }
  if (v >= 500) r = 0;
  return "rgb(" + Math.round(r) + "," + Math.round(g) + ",0)";
}

var html = "";
rows.forEach(function (row) {
  html += '<tr><th scope="row"><a class="alien" href="#">' + row[0] + "</a></th>";
  row[1].split(" ").forEach(function (v) {
    html += v == "-" ? "<td></td>" : '<td style="background:' + color(+v) + '">' + v + "</td>";
  });
  html += "</tr>";
});
document.querySelector("#heatmap tbody").innerHTML = html;
document.querySelector("#heatmap tfoot").innerHTML = "<tr><td></td>" + times.map(function (t) {
  return "<td><span>" + t + "</span></td>";
}).join("") + "</tr>";
</script>
</body>
</html>
```
FILE: styles.css
```css
* {
  box-sizing: border-box;
}
body {
  margin: 0;
  min-height: 100vh;
  background: #212529;
  color: #dee2e6;
  font-family: Ubuntu, "Noto Sans", sans-serif;
  font-size: 32px;
  line-height: 48px;
}
a {
  color: #6ea8fe;
}
svg {
  fill: currentColor;
}
button {
  border: 0;
  color: #fff;
  font: inherit;
}
.sprite {
  display: none;
}
.alien {
  font-family: "DejaVu Sans", sans-serif;
  font-weight: bold;
  white-space: nowrap;
}

/* top bar */
.navbar {
  display: flex;
  align-items: center;
  height: 100px;
  position: relative;
  box-shadow: 0 16px 32px rgba(0,0,0,.15);
}
.brand {
  display: flex;
  align-items: center;
  gap: 9px;
  width: 16.67%;
  height: 100%;
  padding: 0 32px 4px;
  background: #1a1d20;
  border-right: 2px solid #16181b;
  color: #fff;
  text-decoration: none;
  white-space: nowrap;
}
.logo {
  width: 48px;
  height: 54px;
  fill: none;
}
.tools {
  display: flex;
  gap: 7px;
  margin-left: auto;
}
.tool {
  display: flex;
  align-items: center;
  justify-content: center;
  width: 84px;
  height: 76px;
  background: #6c757d;
  border-radius: 12px;
}
.tool svg {
  width: 34px;
  height: 34px;
}
.period {
  width: 106px;
  margin-left: 17px;
}
.search {
  width: 478px;
  height: 100px;
  margin: 0 28px 0 12px;
  padding: 0 32px;
  background: #212529;
  border: 2px solid #495057;
  border-radius: 12px;
  color: #dee2e6;
  font: inherit;
}
.search::placeholder {
  color: #a6a9ac;
}
.plug {
  width: 36px;
  height: 48px;
  margin-right: 12px;
  color: #008000;
}

/* side menu */
.layout {
  display: grid;
  grid-template-columns: 16.67% 1fr;
}
.sidebar {
  padding-top: 32px;
  background: #2b3035;
  border: 2px solid #495057;
}
.menu {
  display: flex;
  flex-direction: column;
  width: 356px;
}
.menu a {
  display: flex;
  align-items: center;
  gap: 7px;
  height: 74px;
  padding: 0 32px;
  border-radius: 12px;
  font-size: 28px;
  font-weight: 500;
  text-decoration: none;
  white-space: nowrap;
}
.menu a.active {
  background: #0d6efd;
  color: #fff;
}
.menu svg {
  width: 28px;
  height: 28px;
  flex: none;
}
.menu .slim {
  width: 25px;
}
.menu .wide {
  width: 32px;
}
.menu .who {
  gap: 4px;
}
.menu .masked {
  width: 272px;
  height: 32px;
  margin-top: 8px;
}
.badge {
  display: flex;
  align-items: center;
  gap: 8px;
  height: 42px;
  margin-top: 5px;
  padding: 0 14px;
  background: #198754;
  border-radius: 24px;
  color: #fff;
  font-size: 26px;
}
.badge svg {
  width: 26px;
}
.theme {
  display: flex;
  align-items: center;
  justify-content: center;
  gap: 8px;
  width: 110px;
  height: 84px;
  margin-top: 33px;
  background: #6f2cf9;
  border-radius: 12px;
}
.theme svg {
  width: 33px;
  height: 33px;
}
.caret {
  border: 9px solid transparent;
  border-top-color: #fff;
  border-bottom: 0;
}

/* content */
main {
  min-width: 0;
  padding: 33px 48px 32px;
}
.crumbs {
  display: flex;
  align-items: center;
  gap: 11px;
  height: 52px;
  margin: 0 37px 5px;
  font-size: 28px;
}
.crumbs .plain {
  color: #dee2e6;
}
.sep {
  width: 12px;
  height: 12px;
  border: solid #dee2e6;
  border-width: 3px 3px 0 0;
  transform: rotate(45deg);
}
.pick {
  display: flex;
  position: relative;
}
.pick select {
  width: 502px;
  height: 52px;
  padding: 0 8px;
  appearance: none;
  background: #2b2a33;
  border: 2px solid #8f8f9d;
  border-radius: 8px;
  color: #fff;
  font-size: 26px;
}
.pick svg {
  position: absolute;
  right: 14px;
  top: 21px;
  width: 16px;
  height: 10px;
}
.card {
  margin: 0 38px 6px 37px;
  padding: 32px;
  border: 2px solid #424549;
  border-radius: 12px;
}
h5 {
  display: flex;
  align-items: flex-start;
  gap: 9px;
  height: 62px;
  margin: 0 0 16px;
  font-size: 40px;
  font-weight: 500;
  line-height: 54px;
}
h5 svg {
  width: 40px;
  height: 40px;
  margin-top: 6px;
}
h5 .slim {
  width: 30px;
}
.group {
  display: flex;
}
.group button {
  height: 62px;
  padding: 0 17px;
  background: #6c757d;
  font-size: 28px;
  font-weight: 400;
}
.group .on {
  background: #0d6efd;
}
.group button:first-child {
  border-radius: 8px 0 0 8px;
}
.group button:last-child {
  border-radius: 0 8px 8px 0;
}
.group button:only-child {
  border-radius: 8px;
}

/* charts */
.chart {
  position: relative;
  height: 498px;
  padding: 120px 253px 0 121px;
  color: #b9b8ce;
  font-size: 25px;
  line-height: 28px;
}
.toolbox {
  position: absolute;
  right: 14px;
  top: 12px;
  width: 32px;
  height: 28px;
}
.unit {
  position: absolute;
  left: 235px;
  top: 62px;
}
.plotrow {
  display: flex;
  gap: 16px;
}
.yaxis {
  display: flex;
  flex-direction: column;
  justify-content: space-between;
  width: 115px;
  height: 268px;
  margin: -16px 0 -12px;
  text-align: right;
}
.plot {
  flex: 1;
  min-width: 0;
  height: 240px;
  overflow: visible;
}
.plot path,
.plot polyline {
  vector-effect: non-scaling-stroke;
}
.grid {
  stroke: #484753;
  stroke-width: 2;
}
.axis {
  fill: none;
  stroke: #b9b8ce;
  stroke-width: 2;
}
.band {
  fill: rgba(255,255,255,.3);
}
.dense {
  fill: rgba(255,255,255,.54);
}
.line {
  fill: none;
  stroke: #fddd60;
  stroke-width: 4;
  stroke-linejoin: bevel;
}
.xaxis {
  display: grid;
  grid-template-columns: repeat(6, 1fr);
  margin: 11px -35px 0 128px;
  text-align: center;
  white-space: nowrap;
}
.legend {
  display: flex;
  align-items: center;
  gap: 9px;
  position: absolute;
  right: 30px;
  bottom: 7px;
  font-size: 28px;
}
.legend i {
  width: 50px;
  height: 24px;
  background: radial-gradient(circle, #fddd60 12px, transparent 12px), linear-gradient(#fddd60, #fddd60) center / 50px 4px no-repeat;
}

/* round trip time by child site */
.heat {
  padding-bottom: 34px;
}
.heatmap {
  width: 100%;
  border-collapse: collapse;
  table-layout: fixed;
  font-size: 20px;
  line-height: 28px;
}
.names {
  width: 25%;
}
.heatmap th,
.heatmap td {
  height: 40px;
  padding: 0;
}
.heatmap thead th {
  height: 52px;
  background: #000080;
  color: #fff;
  font-size: 37px;
}
.heatmap thead svg {
  width: 34px;
  height: 34px;
  margin-right: 10px;
  vertical-align: -4px;
}
.heatmap tbody td {
  background: #555;
  color: #000;
  text-align: center;
}
.heatmap tbody th {
  text-align: right;
}
.heatmap tbody a {
  color: #dee2e6;
  font-size: 26px;
}
.heatmap tfoot td {
  height: 233px;
  font-size: 21px;
  text-align: center;
  vertical-align: middle;
}
.heatmap tfoot span {
  display: inline-block;
  writing-mode: vertical-rl;
  white-space: nowrap;
}

.site {
  height: 48px;
  margin: 0 13px 4px;
  background: #000080;
  color: #fff;
  font-size: 32px;
  text-align: center;
}
.pair {
  display: grid;
  grid-template-columns: 1fr 1fr;
  gap: 48px;
  margin: 0 38px 0 37px;
}
.pair .card {
  margin: 0;
  padding-bottom: 64px;
}
.stats {
  width: 100%;
  border-collapse: collapse;
}
.stats td {
  height: 82px;
  padding: 0 16px;
  border-bottom: 2px solid #495057;
}
.stats tr:nth-child(odd) {
  background: #1f2327;
}
.first td:first-child {
  width: 44%;
}
.second td:first-child {
  width: 73%;
}
hr {
  margin: 20px 0 0;
  border: 0;
  border-top: 2px solid #495057;
}
footer {
  padding-bottom: 4px;
}
```
